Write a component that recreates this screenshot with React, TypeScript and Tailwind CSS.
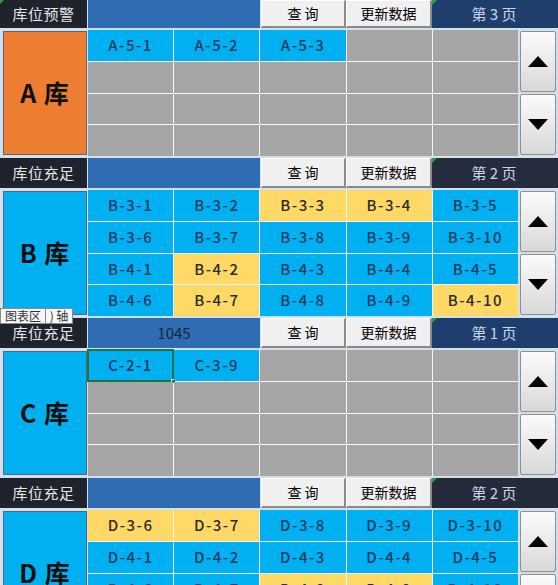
import React from "react";

type Kind = "b" | "y" | "g";
type Cell = [string, Kind];

interface Section {
  label: string;
  name: string;
  labelBg: string;
  page: string;
  pageBg: string;
  headerH: string;
  value: string;
  cells: Cell[];
  selected?: number;
}

const G: Cell = ["", "g"];

const sections: Section[] = [
  {
    label: "库位预警",
    name: "A 库",
    labelBg: "bg-[#ed7d31]",
    page: "第 3 页",
    pageBg: "bg-[#1e3e6c]",
    headerH: "h-[28px]",
    value: "",
    cells: [
      ["A-5-1", "b"], ["A-5-2", "b"], ["A-5-3", "b"], G, G,
      G, G, G, G, G,
      G, G, G, G, G,
      G, G, G, G, G,
    ],
  },
  {
    label: "库位充足",
    name: "B 库",
    labelBg: "bg-[#00b0f0]",
    page: "第 2 页",
    pageBg: "bg-[#252c3e]",
    headerH: "h-[30px]",
    value: "",
    cells: [
      ["B-3-1", "b"], ["B-3-2", "b"], ["B-3-3", "y"], ["B-3-4", "y"], ["B-3-5", "b"],
      ["B-3-6", "b"], ["B-3-7", "b"], ["B-3-8", "b"], ["B-3-9", "b"], ["B-3-10", "b"],
      ["B-4-1", "b"], ["B-4-2", "y"], ["B-4-3", "b"], ["B-4-4", "b"], ["B-4-5", "b"],
      ["B-4-6", "b"], ["B-4-7", "y"], ["B-4-8", "b"], ["B-4-9", "b"], ["B-4-10", "y"],
    ],
  },
  {
    label: "库位充足",
    name: "C 库",
    labelBg: "bg-[#00b0f0]",
    page: "第 1 页",
    pageBg: "bg-[#1e3f6e]",
    headerH: "h-[30px]",
    value: "1045",
    selected: 0,
    cells: [
      ["C-2-1", "b"], ["C-3-9", "b"], G, G, G,
      G, G, G, G, G,
      G, G, G, G, G,
      G, G, G, G, G,
    ],
  },
  {
    label: "库位充足",
    name: "D 库",
    labelBg: "bg-[#00b0f0]",
    page: "第 2 页",
    pageBg: "bg-[#262b3c]",
    headerH: "h-[30px]",
    value: "",
    cells: [
      ["D-3-6", "y"], ["D-3-7", "y"], ["D-3-8", "b"], ["D-3-9", "b"], ["D-3-10", "b"],
      ["D-4-1", "b"], ["D-4-2", "b"], ["D-4-3", "b"], ["D-4-4", "b"], ["D-4-5", "b"],
      ["D-4-6", "b"], ["D-4-7", "b"], ["D-4-8", "y"], ["D-4-9", "y"], ["D-4-10", "b"],
      ["D-5-1", "b"], ["D-5-2", "b"], ["D-5-3", "b"], ["D-5-4", "b"], ["D-5-5", "b"],
    ],
  },
];

const kindClass: Record<Kind, string> = {
  b: "bg-[#00b0f0] text-[#1f3a62]",
  y: "bg-[#ffd966] text-[#2b2b2b]",
  g: "bg-[#a6a6a6]",
};

function Triangle({ up }: { up: boolean }) {
  return (
    <svg width="20" height="11" viewBox="0 0 20 11">
      {up ? <polygon points="10,0 20,11 0,11" fill="#000" /> : <polygon points="0,0 20,0 10,11" fill="#000" />}
    </svg>
  );
}

function ScrollBtn({ up }: { up: boolean }) {
  return (
    <div className="flex-1 flex items-center justify-center rounded-[2px] border border-[#8f8f8f] bg-linear-to-b from-[#fbfbfb] to-[#d8d8d8]">
      <Triangle up={up} />
    </div>
  );
}

function Header({ s }: { s: Section }) {
  return (
    <div className={`flex ${s.headerH} shrink-0`}>
      <div className="w-[87px] bg-[#1f232d] text-[#e6e6e6] text-[15px] flex items-center justify-center tracking-[0.5px]">
        {s.label}
      </div>
      <div className="ml-px w-[172px] bg-[#2f6cb1] text-[#14233f] text-[15px] flex items-center justify-center">
        {s.value}
      </div>
      <div className="ml-px w-[85px] bg-[#f0f0f0] border-t border-l border-t-white border-l-white border-b-2 border-r-2 border-b-[#8a8a8a] border-r-[#8a8a8a] text-black text-[14px] flex items-center justify-center">
        查 询
      </div>
      <div className="w-[86px] bg-[#f0f0f0] border-t border-l border-t-white border-l-white border-b-2 border-r-2 border-b-[#8a8a8a] border-r-[#8a8a8a] text-black text-[14px] flex items-center justify-center">
        更新数据
      </div>
      <div className={`relative flex-1 ${s.pageBg} text-[#c9d6e9] text-[15px] flex items-center justify-center pr-[2px]`}>
        <div className="absolute left-0 top-0 w-0 h-0 border-t-[5px] border-r-[5px] border-t-[#2e9a4a] border-r-transparent" />
        {s.page}
      </div>
    </div>
  );
}

function Body({ s }: { s: Section }) {
  return (
    <div className="flex h-[126px] shrink-0">
      <div className="w-[88px] pl-[3px] pr-px py-px flex">
        <div className={`flex-1 ${s.labelBg} border border-[#5d6472] flex items-center justify-center text-[25px] font-bold text-[#111] tracking-[1px]`}>
          {s.name}
        </div>
      </div>
      <div className="w-[430px] grid grid-cols-5 grid-rows-4 gap-px bg-[#f4f8fb]">
        {s.cells.map((c, i) => (
          <div
            key={i}
            className={`relative flex items-center justify-center text-[15px] font-medium tracking-[1.5px] ${kindClass[c[1]]}`}
          >
            {c[0]}
            {s.selected === i && (
              <>
                <div className="absolute -inset-px border-2 border-[#217346]" />
                <div className="absolute -right-[3px] -bottom-[3px] w-[5px] h-[5px] bg-[#217346] border border-white" />
              </>
            )}
          </div>
        ))}
      </div>
      <div className="ml-[2px] w-[36px] flex flex-col gap-[2px] pt-px pb-px">
        <ScrollBtn up />
        <ScrollBtn up={false} />
      </div>
    </div>
  );
}

export default function App() {
  return (
    <div className="relative w-[558px] h-[585px] overflow-hidden bg-[#d3dfeb] font-['Noto_Sans_CJK_SC','Noto_Sans',sans-serif]">
      <div className="flex flex-col gap-[2px]">
        {sections.map((s, i) => (
          <div key={i} className="flex flex-col gap-[2px]">
            <Header s={s} />
            <Body s={s} />
          </div>
        ))}
      </div>
      <div className="absolute left-0 top-0 w-0 h-0 border-t-[4px] border-r-[4px] border-t-[#2e9a4a] border-r-transparent" />
      <div className="absolute left-0 top-[308px] flex">
        <div className="h-[16px] w-[46px] bg-[#f7f7f7] border border-[#8a8a8a] text-[12px] leading-[14px] text-[#333] flex items-center justify-center">
          图表区
        </div>
        <div className="h-[16px] w-[27px] bg-[#f7f7f7] border border-l-0 border-[#8a8a8a] text-[12px] leading-[14px] text-[#333] flex items-center justify-center">
          ) 轴
        </div>
      </div>
    </div>
  );
}
